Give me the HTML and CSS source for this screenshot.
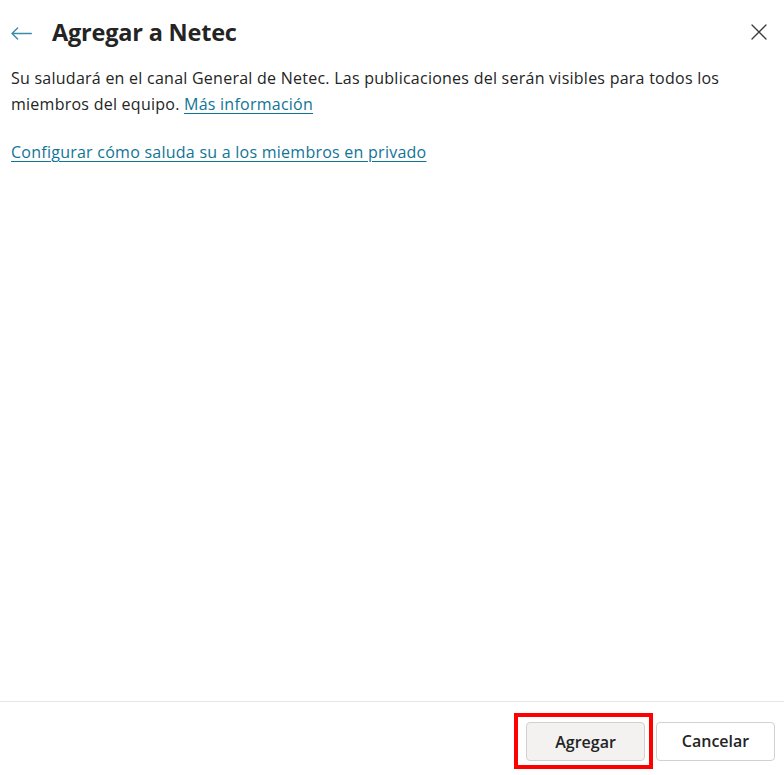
FILE: index.html
```html
<!DOCTYPE html>
<html lang="es">
<head>
<meta charset="utf-8">
<title>Agregar a Netec</title>
<link rel="stylesheet" href="styles.css">
</head>
<body>
<div class="dialog">
  <header class="header">
    <button class="icon-btn back" aria-label="Atrás">
      <svg width="21" height="13" viewBox="0 0 21 13" fill="none" stroke="#3a8ca8" stroke-width="1.4" stroke-linecap="round" stroke-linejoin="round"><path d="M20.3 6.5H1M6.6 1L1 6.5l5.6 5.5"/></svg>
    </button>
    <h1 class="title">Agregar a Netec</h1>
    <button class="icon-btn close" aria-label="Cerrar">
      <svg width="16" height="16" viewBox="0 0 16 16" fill="none" stroke="#3b3a39" stroke-width="1.3" stroke-linecap="round"><path d="M1 1l14 14M15 1L1 15"/></svg>
    </button>
  </header>
  <main class="content">
    <p class="desc">Su saludará en el canal General de Netec. Las publicaciones del serán visibles para todos los miembros del equipo. <a href="#" class="link">Más información</a></p>
    <p class="config"><a href="#" class="link">Configurar cómo saluda su a los miembros en privado</a></p>
  </main>
  <footer class="footer">
    <div class="highlight">
      <button class="btn btn-primary">Agregar</button>
    </div>
    <button class="btn">Cancelar</button>
  </footer>
</div>
</body>
</html>
```

FILE: styles.css
```css
* { box-sizing: border-box; }
html, body { margin: 0; padding: 0; background: #fff; }
body {
  font-family: "Segoe UI", "Open Sans", "Noto Sans", sans-serif;
  color: #242424;
}
.dialog {
  display: flex;
  flex-direction: column;
  height: 100vh;
}
.header {
  display: flex;
  align-items: center;
  height: 64px;
  padding: 0 16px 0 10px;
}
.icon-btn {
  background: none;
  border: 0;
  padding: 0;
  display: flex;
  align-items: center;
  justify-content: center;
  cursor: pointer;
}
.back { width: 22px; height: 22px; margin-top: 2px; }
.close { width: 18px; height: 18px; margin-left: auto; }
.title {
  margin: 0 0 0 20px;
  font-size: 23.5px;
  font-weight: 700;
  color: #242424;
  letter-spacing: -0.2px;
}
.content {
  flex: 1;
  padding: 1px 11px 0;
  font-size: 16px;
  letter-spacing: 0.25px;
}
.desc {
  margin: 0;
  line-height: 26px;
}
.config {
  margin: 22px 0 0;
  line-height: 26px;
}
.link {
  color: #0f7597;
  text-decoration: underline;
  text-underline-offset: 3px;
}
.footer {
  display: flex;
  justify-content: flex-end;
  align-items: center;
  gap: 3px;
  border-top: 1px solid #e6e6e6;
  padding: 11px 9px 6px 0;
}
.highlight {
  border: 4px solid #ff0000;
  padding: 5px 4px 4px 8px;
  display: flex;
}
.btn {
  width: 119px;
  height: 39px;
  border: 1px solid #d1d1d1;
  border-radius: 4px;
  background: #fff;
  font-family: inherit;
  font-size: 16px;
  font-weight: 600;
  color: #242424;
  cursor: pointer;
}
.btn-primary { background: #f3f2f1; }
```
